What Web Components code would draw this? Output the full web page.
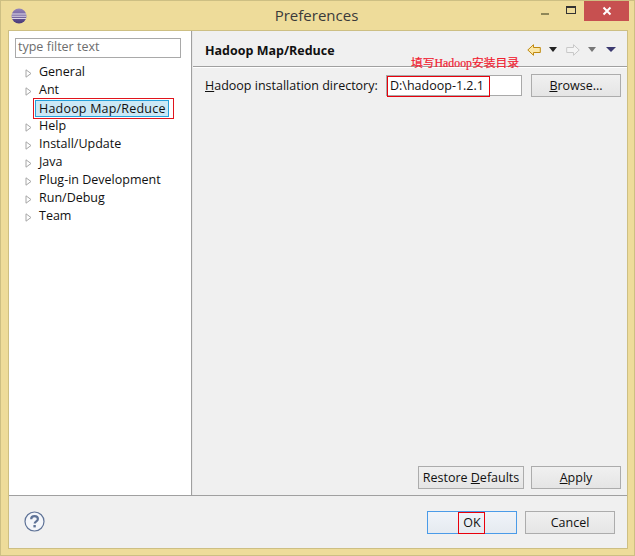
<!DOCTYPE html>
<html lang="en">
<head>
<meta charset="utf-8">
<title>Preferences</title>
<style>
    html, body { margin: 0; padding: 0; background: #eedc9a; }
    body { font: 12.5px "Open Sans", "Noto Sans", sans-serif; color: #000; }
</style>
</head>
<body>
<pref-window>
    <tree-panel slot="tree"></tree-panel>
    <hadoop-page slot="page"></hadoop-page>
    <dialog-footer slot="footer"></dialog-footer>
</pref-window>

<script>
// Boton generico
class UiButton extends HTMLElement {
    constructor() {
        super();
        this.attachShadow({ mode: 'open' });
    }

    connectedCallback() {
        const w = this.getAttribute('w') || 90;
        this.shadowRoot.innerHTML = `
            <style>
                :host {
                    display: flex;
                    align-items: center;
                    justify-content: center;
                    box-sizing: border-box;
                    width: ${w}px;
                    height: 23px;
                    border: 1px solid #acacac;
                    background: linear-gradient(#f0f0f0, #e5e5e5);
                    color: #111;
                    font-size: 12.5px;
                    position: relative;
                }
                :host([focused]) {
                    border-color: #4a9be8;
                    background: linear-gradient(#f0f4f9, #e5eaf0);
                }
            </style>
            <slot></slot>
        `;
    }
}

// Ventana
class PrefWindow extends HTMLElement {
    constructor() {
        super();
        this.attachShadow({ mode: 'open' });
    }

    connectedCallback() {
        this.shadowRoot.innerHTML = `
            <style>
                :host {
                    display: flex;
                    flex-direction: column;
                    box-sizing: border-box;
                    width: 635px;
                    height: 556px;
                    background: #eedc9a;
                    border: 1px solid #cdbf83;
                }
                .title {
                    flex: none;
                    height: 29px;
                    display: flex;
                    align-items: center;
                    position: relative;
                }
                .icon { position: absolute; left: 10px; top: 7px; }
                .text {
                    flex: 1;
                    text-align: center;
                    font-size: 15px;
                    color: #3a3a3a;
                    padding: 0 2px 1px 0;
                }
                .controls {
                    position: absolute;
                    right: 5px;
                    top: 0;
                    display: flex;
                }
                .controls div {
                    height: 20px;
                    display: flex;
                    align-items: center;
                    justify-content: center;
                }
                .min { width: 27px; }
                .min i { display: block; width: 8px; height: 2px; background: #8f8758; margin-top: 6px; }
                .max { width: 26px; }
                .max i { display: block; box-sizing: border-box; width: 10px; height: 8px; border: 1px solid #333; border-top-width: 2px; margin-top: -2px; }
                .close { width: 45px; background: #c75050; }
                .client {
                    flex: 1;
                    min-height: 0;
                    margin: 0 6px 6px 7px;
                    border: 1px solid #cdbf83;
                    background: #f0f0f0;
                    display: flex;
                    flex-direction: column;
                }
                .main { flex: 1; min-height: 0; display: flex; border-bottom: 1px solid #a0a0a0; background: #fff; }
                .tree { flex: none; width: 182px; border-right: 1px solid #a0a0a0; }
                .page { flex: 1; min-width: 0; border-left: 1px solid #e8e8e8; background: #f0f0f0; }
                .footer { flex: none; height: 52px; }
            </style>
            <div class="title">
                <svg class="icon" width="16" height="16" viewBox="0 0 16 16">
                    <defs>
                        <linearGradient id="ec" x1="0" y1="0" x2="0" y2="1">
                            <stop offset="0" stop-color="#9686bb"/>
                            <stop offset="1" stop-color="#483878"/>
                        </linearGradient>
                    </defs>
                    <circle cx="8" cy="8" r="7.5" fill="url(#ec)"/>
                    <path d="M1 6h14M.6 8.200h14.800M1 10.400h14" stroke="#e9e3ee" stroke-width="1"/>
                </svg>
                <div class="text">Preferences</div>
                <div class="controls">
                    <div class="min"><i></i></div>
                    <div class="max"><i></i></div>
                    <div class="close">
                        <svg width="10" height="10" viewBox="0 0 10 10"><path d="M1.500 1.500l7 7M8.500 1.500l-7 7" stroke="#fff" stroke-width="2"/></svg>
                    </div>
                </div>
            </div>
            <div class="client">
                <div class="main">
                    <div class="tree"><slot name="tree"></slot></div>
                    <div class="page"><slot name="page"></slot></div>
                </div>
                <div class="footer"><slot name="footer"></slot></div>
            </div>
        `;
    }
}

// Arbol de la izquierda
class TreePanel extends HTMLElement {
    constructor() {
        super();
        this.attachShadow({ mode: 'open' });
    }

    connectedCallback() {
        const items = ['General', 'Ant', 'Hadoop Map/Reduce', 'Help', 'Install/Update', 'Java', 'Plug-in Development', 'Run/Debug', 'Team'];
        const rows = items.map(name => {
            const selected = name === 'Hadoop Map/Reduce';
            const arrow = selected ? '' : '<svg width="7" height="9" viewBox="0 0 7 9"><path d="M1 .8L6 4.500 1 8.200z" fill="#fff" stroke="#a6a6a6"/></svg>';
            return `<li class="${selected ? 'sel' : ''}"><span class="arrow">${arrow}</span><span class="name">${name}</span></li>`;
        }).join('');

        this.shadowRoot.innerHTML = `
            <style>
                :host { display: block; padding: 7px 9px 0 6px; font-size: 12.5px; }
                .filter {
                    box-sizing: border-box;
                    height: 20px;
                    border: 1px solid #a9a9a9;
                    padding-left: 2px;
                    line-height: 16px;
                    color: #6d6d6d;
                    width: 166px;
                }
                ul { list-style: none; margin: 5px 0 0 0; padding: 0; }
                li { height: 18px; display: flex; align-items: center; color: #111; }
                .arrow { flex: none; width: 24px; padding-left: 10px; box-sizing: border-box; display: flex; align-items: center; margin-top: 2px; }
                .name { white-space: nowrap; margin-top: -2px; }
                .sel { position: relative; }
                .sel .name {
                    background: #cbe8f6;
                    border: 1px solid #26a0da;
                    margin: 0 0 0 -4px;
                    padding: 0 2px 0 3px;
                    height: 17px;
                    line-height: 15px;
                    box-sizing: border-box;
                    letter-spacing: .2px;
                }
                .mark {
                    position: absolute;
                    left: 18px;
                    top: -1px;
                    width: 139px;
                    height: 19px;
                    border: 1px solid #e0141c;
                }
            </style>
            <div class="filter">type filter text</div>
            <ul>${rows}</ul>
        `;
        const mark = document.createElement('div');
        mark.className = 'mark';
        this.shadowRoot.querySelector('.sel').appendChild(mark);
    }
}

// Pagina Hadoop
class HadoopPage extends HTMLElement {
    constructor() {
        super();
        this.attachShadow({ mode: 'open' });
    }

    connectedCallback() {
        this.shadowRoot.innerHTML = `
            <style>
                :host { display: flex; flex-direction: column; height: 100%; box-sizing: border-box; position: relative; }
                .head {
                    flex: none;
                    height: 35px;
                    display: flex;
                    align-items: center;
                    justify-content: space-between;
                    padding: 0 11px 0 12px;
                    border-bottom: 1px solid #a0a0a0;
                    box-shadow: 0 1px 0 #fff;
                }
                h1 { margin: 4px 0 0; font-size: 12.5px; font-weight: 700; color: #111; }
                .nav { display: flex; align-items: center; gap: 8px; margin-top: 2px; }
                .drop { width: 0; height: 0; border: 4px solid transparent; border-top: 5px solid #222; border-bottom: 0; }
                .drop.off { border-top-color: #777; }
                .drop.menu { border-width: 5px 5px 0; border-top-color: #3c3a70; margin-left: 2px; }
                .body {
                    flex: 1;
                    display: flex;
                    flex-direction: column;
                    justify-content: space-between;
                    padding: 7px 6px 6px 12px;
                }
                .row { display: flex; align-items: center; }
                label { white-space: nowrap; color: #111; width: 181px; flex: none; box-sizing: border-box; }
                .input {
                    box-sizing: border-box;
                    width: 136px;
                    height: 21px;
                    background: #fff;
                    border: 1px solid #a9a9a9;
                    line-height: 19px;
                    padding-left: 3px;
                    margin-right: 9px;
                    color: #111;
                    flex: none;
                }
                .actions { display: flex; justify-content: flex-end; gap: 7px; }
                .note {
                    position: absolute;
                    left: 218px;
                    top: 22px;
                    color: #f02030;
                    font: 400 11.8px "Liberation Serif", "Noto Sans CJK SC", serif;
                    -webkit-text-stroke: .2px #f02030;
                    white-space: nowrap;
                }
                .mark {
                    position: absolute;
                    left: 194px;
                    top: 45px;
                    width: 101px;
                    height: 19px;
                    border: 1px solid #e8000c;
                }
            </style>
            <div class="head">
                <h1>Hadoop Map/Reduce</h1>
                <div class="nav">
                    <svg width="14" height="12" viewBox="0 0 14 12"><path d="M6.500.7L.8 6l5.700 5.300V8.500h6.800v-5H6.500z" fill="#fbe7a8" stroke="#c08a10"/></svg>
                    <span class="drop"></span>
                    <svg width="14" height="12" viewBox="0 0 14 12" style="margin-left:1px"><path d="M7.500.7L13.200 6 7.500 11.300V8.500H.7v-5h6.800z" fill="#f4f4f4" stroke="#c8c8c8"/></svg>
                    <span class="drop off"></span>
                    <span class="drop menu"></span>
                </div>
            </div>
            <div class="body">
                <div class="row">
                    <label><u>H</u>adoop installation directory:</label>
                    <div class="input">D:\\hadoop-1.2.1</div>
                    <ui-button w="90"><span><u>B</u>rowse...</span></ui-button>
                </div>
                <div class="actions">
                    <ui-button w="106"><span>Restore <u>D</u>efaults</span></ui-button>
                    <ui-button w="90"><span><u>A</u>pply</span></ui-button>
                </div>
            </div>
            <div class="note">填写Hadoop安装目录</div>
            <div class="mark"></div>
        `;
    }
}

// Pie del dialogo
class DialogFooter extends HTMLElement {
    constructor() {
        super();
        this.attachShadow({ mode: 'open' });
    }

    connectedCallback() {
        this.shadowRoot.innerHTML = `
            <style>
                :host {
                    display: flex;
                    align-items: center;
                    justify-content: space-between;
                    height: 100%;
                    padding: 0 12px 0 15px;
                    box-sizing: border-box;
                    position: relative;
                }
                .help { margin-top: -2px; display: block; }
                .buttons { display: flex; gap: 8px; margin-top: 0; }
                .mark {
                    position: absolute;
                    left: 449px;
                    top: 16px;
                    width: 25px;
                    height: 20px;
                    border: 1px solid #e8000c;
                }
            </style>
            <svg class="help" width="21" height="21" viewBox="0 0 21 21">
                <circle cx="10.500" cy="10.500" r="9.500" fill="#f4f6fa" stroke="#5f7397" stroke-width="1.200"/>
                <path d="M7.200 8.200c0-2 1.500-3 3.300-3s3.400 1 3.400 2.800c0 2.400-3.200 2.300-3.200 4.600" fill="none" stroke="#5f7397" stroke-width="2.200"/>
                <rect x="9.400" y="14" width="2.400" height="2.400" fill="#5f7397"/>
            </svg>
            <div class="buttons">
                <ui-button w="90" focused>OK</ui-button>
                <ui-button w="90">Cancel</ui-button>
            </div>
            <div class="mark"></div>
        `;
    }
}

// Registrar los componentes
customElements.define('ui-button', UiButton);
customElements.define('pref-window', PrefWindow);
customElements.define('tree-panel', TreePanel);
customElements.define('hadoop-page', HadoopPage);
customElements.define('dialog-footer', DialogFooter);
</script>
</body>
</html>
